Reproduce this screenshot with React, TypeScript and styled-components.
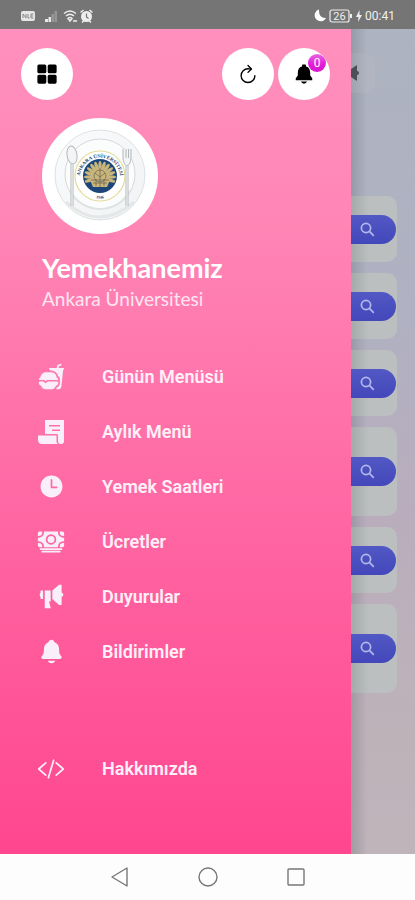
import React from "react";
import styled, { createGlobalStyle } from "styled-components";
import {
  IoGrid,
  IoRefreshOutline,
  IoNotificationsSharp,
  IoFastFood,
  IoTime,
  IoCash,
  IoMegaphoneSharp,
  IoNotifications,
  IoCodeSlashOutline,
} from "react-icons/io5";

const GlobalStyle = createGlobalStyle`
  *, *::before, *::after { box-sizing: border-box; }
  body { margin: 0; font-family: Roboto, "Noto Sans", sans-serif; }
  button { font: inherit; border: 0; padding: 0; cursor: pointer; }
`;

const Screen = styled.div`
  display: flex;
  flex-direction: column;
  min-height: 100vh;
  background: #fdfdfd;
`;

const StatusBar = styled.header`
  display: flex;
  align-items: center;
  justify-content: space-between;
  height: 29px;
  padding: 2px 20px 0 21px;
  background: #757575;
  color: #f1f1f1;
`;

const StatusGroup = styled.div<{ $gap: number }>`
  display: flex;
  align-items: center;
  gap: ${(p) => p.$gap}px;
  svg { display: block; }
`;

const Clock = styled.time`
  font-size: 12px;
  line-height: 16px;
`;

const Stage = styled.div`
  display: flex;
  flex: 1;
`;

const Drawer = styled.aside`
  display: flex;
  flex-direction: column;
  flex: 1;
  min-width: 0;
  background: linear-gradient(#ff90bd, #ff85b5 24%, #ff66a3 60%, #ff468f);
`;

const Toolbar = styled.div`
  display: flex;
  gap: 4px;
  padding: 19px 21px 0;
`;

const RoundButton = styled.button<{ $push?: boolean }>`
  position: relative;
  display: grid;
  place-items: center;
  width: 52px;
  height: 52px;
  margin-right: ${(p) => (p.$push ? "auto" : "0")};
  border-radius: 50%;
  background: #fff;
  color: #000;
`;

const Badge = styled.span`
  position: absolute;
  top: 6px;
  right: 4px;
  width: 18px;
  height: 18px;
  border-radius: 50%;
  background: linear-gradient(#e765e2, #e01bd6 60%, #d816cf);
  color: #fff;
  font-size: 12px;
  line-height: 18px;
  text-align: center;
`;

const Profile = styled.div`
  display: flex;
  flex-direction: column;
  align-items: flex-start;
  padding: 18px 42px 0;
  color: #fff;
`;

const Avatar = styled.div`
  width: 116px;
  height: 116px;
  border-radius: 50%;
  background: #fff;
  svg { display: block; }
`;

const Title = styled.h1`
  margin: 17px 0 0;
  font: 700 27px/34px Lato, sans-serif;
`;

const Subtitle = styled.p`
  margin: 2px 0 0;
  font: 400 19px/24px Lato, sans-serif;
  color: #ffe6f1;
`;

const Menu = styled.nav`
  display: flex;
  flex-direction: column;
  margin-top: 38px;
`;

const MenuLink = styled.a<{ $apart?: boolean }>`
  display: flex;
  align-items: center;
  gap: 37px;
  height: 55px;
  margin-top: ${(p) => (p.$apart ? "62px" : "0")};
  padding-left: 37px;
  color: #fff0f7;
  font-size: 18px;
  font-weight: 600;
  line-height: 24px;
  text-decoration: none;
`;

const MenuIcon = styled.span`
  display: grid;
  place-items: center;
  width: 28px;
  height: 28px;
  color: #f8effa;
`;

const Backdrop = styled.main`
  width: 64px;
  overflow: hidden;
  background:
    linear-gradient(90deg, rgba(70, 75, 85, 0.24), rgba(70, 75, 85, 0) 16px),
    linear-gradient(#adb3c0, #b0b1c2 35%, #b9adbd 58%, #beb2b9 85%, #beb4ba);
`;

const Announce = styled.button`
  display: flex;
  align-items: center;
  width: 24px;
  height: 40px;
  margin-top: 24px;
  border-radius: 0 10px 10px 0;
  background: rgba(190, 193, 200, 0.2);
  color: #4c4f57;
`;

const CardList = styled.div`
  display: flex;
  flex-direction: column;
  gap: 11px;
  margin-top: 103px;
`;

const Card = styled.section<{ $tall?: boolean }>`
  display: flex;
  flex-direction: column;
  justify-content: center;
  width: 46px;
  height: ${(p) => (p.$tall ? 89 : 66)}px;
  border-radius: 0 10px 10px 0;
  background: linear-gradient(90deg, #a4a9aa, #bcbfc0 18px);
`;

const SearchButton = styled.button`
  display: flex;
  align-items: center;
  width: 45px;
  height: 29px;
  padding-left: 9px;
  border-radius: 0 15px 15px 0;
  background: linear-gradient(#5258c4, #4347ba);
  color: #b3b9ea;
`;

const SystemNav = styled.footer`
  display: flex;
  align-items: center;
  justify-content: center;
  gap: 64px;
  height: 46px;
  background: #fdfdfd;
`;

const SystemButton = styled.button`
  display: grid;
  place-items: center;
  width: 24px;
  height: 24px;
  background: none;
`;

const ReceiptIcon = () => (
  <svg width="28" height="28" viewBox="0 0 28 28" fill="currentColor" aria-hidden="true">
    <path
      fillRule="evenodd"
      d="M8 2h19v21c0 2-1 3-3 3s-3-1-3-3v-5.500c0-1-.5-1.500-1.500-1.500H8zM12 7v1.600h11V7zM15 11.500v1.600h8v-1.600z"
    />
    <path d="M1 17.500h18.500V23c0 1.500.5 2.500 1.500 3H5c-3 0-4-2-4-4.500z" />
  </svg>
);

const SearchIcon = () => (
  <svg width="15" height="15" viewBox="0 0 15 15" fill="none" stroke="currentColor" strokeWidth="1.700" aria-hidden="true">
    <circle cx="6" cy="6" r="4.600" />
    <path d="M9.400 9.400l4.400 4.400" />
  </svg>
);

const AnkaraLogo = () => {
  const petals = Array.from({ length: 13 }, (_, i) => -108 + i * 18);
  return (
    <svg width="116" height="116" viewBox="0 0 116 116" role="img" aria-label="Ankara Üniversitesi">
      <defs>
        <linearGradient id="plate" x1="0" y1="0" x2="1" y2="1">
          <stop offset="0" stopColor="#fafbfc" />
          <stop offset="1" stopColor="#f0f2f3" />
        </linearGradient>
        <path id="nameArc" d="M38.500 64a20 20 0 1 1 39 0" />
        <path id="yearArc" d="M42 74a22.500 22.500 0 0 0 32 0" />
      </defs>
      <circle cx="58" cy="57" r="45" fill="url(#plate)" stroke="#d6dadb" strokeWidth=".8" />
      <path d="M24 84q33 30 68 0" fill="none" stroke="#e4e7e8" strokeWidth="3" />
      <circle cx="58" cy="56" r="35" fill="#fbfcfc" stroke="#ccd1d3" strokeWidth=".8" />
      <path d="M28 73a34 34 0 0 0 60 0" fill="none" stroke="#dfe3e4" strokeWidth="2" />
      <g stroke="#b2b7ba" fill="#f2f4f5">
        <ellipse cx="30" cy="37" rx="5" ry="9" transform="rotate(-8 30 37)" />
        <path d="M30 46v42" strokeWidth="3" />
        <path d="M30 46v42" stroke="#f4f6f7" strokeWidth="1.200" />
        <path d="M81 31v8q0 7 4 9q4-2 4-9v-8M84 31v9M86.500 31v9" />
        <path d="M85 48v40" strokeWidth="3" />
        <path d="M85 48v40" stroke="#f4f6f7" strokeWidth="1.200" />
      </g>
      <circle cx="58" cy="58" r="25" fill="#fff" stroke="#e5dc9c" strokeWidth="1.200" />
      <text fill="#294570" fontSize="5" fontWeight="700" fontFamily="Liberation Serif, serif">
        <textPath href="#nameArc" startOffset="50%" textAnchor="middle">
          ANKARA ÜNİVERSİTESİ
        </textPath>
      </text>
      <text fill="#294570" fontSize="4" fontWeight="700" fontFamily="Liberation Serif, serif">
        <textPath href="#yearArc" startOffset="50%" textAnchor="middle">
          1946
        </textPath>
      </text>
      <circle cx="58" cy="58" r="17" fill="#1c4679" />
      <g fill="#c9b67b">
        {petals.map((a) => (
          <ellipse key={a} cx="58" cy="48" rx="1.700" ry="5" transform={`rotate(${a} 58 59)`} />
        ))}
        <circle cx="58" cy="59" r="9" />
        <path d="M48 62h20l-3 7H51z" />
      </g>
      <g fill="none" stroke="#756b56" strokeWidth=".8">
        <circle cx="58" cy="58" r="6" />
        <path d="M49 62h18M51 65h14M53 55l5 4 5-4M58 50v19M54 61v7M62 61v7" />
      </g>
    </svg>
  );
};

const items = [
  { label: "Günün Menüsü", icon: <IoFastFood size={27} /> },
  { label: "Aylık Menü", icon: <ReceiptIcon /> },
  { label: "Yemek Saatleri", icon: <IoTime size={27} /> },
  { label: "Ücretler", icon: <IoCash size={28} /> },
  { label: "Duyurular", icon: <IoMegaphoneSharp size={27} /> },
  { label: "Bildirimler", icon: <IoNotifications size={27} /> },
  { label: "Hakkımızda", icon: <IoCodeSlashOutline size={28} />, apart: true },
];

const cards = [false, false, false, true, false, true];

export default function App() {
  return (
    <Screen>
      <GlobalStyle />
      <StatusBar>
        <StatusGroup $gap={3}>
          <svg width="14" height="10" viewBox="0 0 14 10" aria-hidden="true">
            <rect width="14" height="10" rx="2" fill="#e6e6e6" />
            <path d="M2 7V3l3 4V3M7 3v4h1.500M10 3h2.500M10 5h2M10 3v4h2.500" fill="none" stroke="#888" />
          </svg>
          <svg width="22" height="12" viewBox="0 0 22 12" aria-hidden="true">
            <path d="M7 9h3v3H7zM10.500 7h2.500v5h-2.500z" fill="#e8e8e8" />
            <path d="M13.500 4H16v8h-2.500zM16.500 1H19v11h-2.500z" fill="#969696" />
          </svg>
          <svg width="14" height="14" viewBox="0 0 14 14" fill="none" stroke="#eee" strokeWidth="1.500" aria-hidden="true">
            <path d="M1 4.500q6-5 12 0M3 7q4-3.500 8 0M5 9.500q2-2 4 0L7 12zM10 12h4" />
          </svg>
          <svg width="13" height="14" viewBox="0 0 13 14" aria-hidden="true">
            <circle cx="6.500" cy="7.500" r="5.500" fill="#eee" />
            <path d="M.5 3.500l3-2.500M12.500 3.500l-3-2.500M2 13.500l2-2M11 13.500l-2-2" stroke="#eee" strokeWidth="1.500" />
            <path d="M6.500 4.500v3.500l2 1.500" fill="none" stroke="#757575" strokeWidth="1.200" />
          </svg>
        </StatusGroup>
        <StatusGroup $gap={3}>
          <svg width="12" height="13" viewBox="0 0 12 13" fill="#fff" aria-hidden="true">
            <path d="M5 .5A6 6 0 1 0 12 9Q4.500 9.500 5 .5z" />
          </svg>
          <svg width="24" height="14" viewBox="0 0 24 14" aria-hidden="true">
            <rect x="1" y="1" width="19" height="12" rx="2" fill="none" stroke="#eee" strokeWidth="1.200" />
            <path d="M22 5v4" stroke="#eee" strokeWidth="2" />
            <text x="10.500" y="11" fontSize="11" fill="#eee" textAnchor="middle" fontFamily="Roboto, sans-serif">
              26
            </text>
          </svg>
          <svg width="6" height="12" viewBox="0 0 6 12" fill="#eee" aria-hidden="true">
            <path d="M3.500 0L0 7h2.500L2 12l4-7H3.500z" />
          </svg>
          <Clock>00:41</Clock>
        </StatusGroup>
      </StatusBar>

      <Stage>
        <Drawer>
          <Toolbar>
            <RoundButton $push aria-label="Menü">
              <IoGrid size={22} />
            </RoundButton>
            <RoundButton aria-label="Yenile">
              <IoRefreshOutline size={22} />
            </RoundButton>
            <RoundButton aria-label="Bildirimler">
              <IoNotificationsSharp size={22} />
              <Badge>0</Badge>
            </RoundButton>
          </Toolbar>
          <Profile>
            <Avatar>
              <AnkaraLogo />
            </Avatar>
            <Title>Yemekhanemiz</Title>
            <Subtitle>Ankara Üniversitesi</Subtitle>
          </Profile>
          <Menu>
            {items.map((item) => (
              <MenuLink key={item.label} href="#" $apart={item.apart}>
                <MenuIcon>{item.icon}</MenuIcon>
                {item.label}
              </MenuLink>
            ))}
          </Menu>
        </Drawer>

        <Backdrop>
          <Announce aria-label="Duyurular">
            <svg width="8" height="18" viewBox="0 0 8 18" fill="currentColor" aria-hidden="true">
              <path d="M0 5l6-4v6q2 0 2 2t-2 2v6l-6-4z" />
            </svg>
          </Announce>
          <CardList>
            {cards.map((tall, i) => (
              <Card key={i} $tall={tall}>
                <SearchButton aria-label="Ara">
                  <SearchIcon />
                </SearchButton>
              </Card>
            ))}
          </CardList>
        </Backdrop>
      </Stage>

      <SystemNav>
        <SystemButton aria-label="Geri">
          <svg width="20" height="22" viewBox="0 0 20 22" fill="none" stroke="#777" strokeWidth="1.400">
            <path d="M2 11L17 2v18z" strokeLinejoin="round" />
          </svg>
        </SystemButton>
        <SystemButton aria-label="Ana ekran">
          <svg width="22" height="22" viewBox="0 0 22 22" fill="none" stroke="#777" strokeWidth="1.400">
            <circle cx="11" cy="11" r="9" />
          </svg>
        </SystemButton>
        <SystemButton aria-label="Son uygulamalar">
          <svg width="20" height="20" viewBox="0 0 20 20" fill="none" stroke="#777" strokeWidth="1.400">
            <rect x="2" y="2" width="16" height="16" rx="1" />
          </svg>
        </SystemButton>
      </SystemNav>
    </Screen>
  );
}
